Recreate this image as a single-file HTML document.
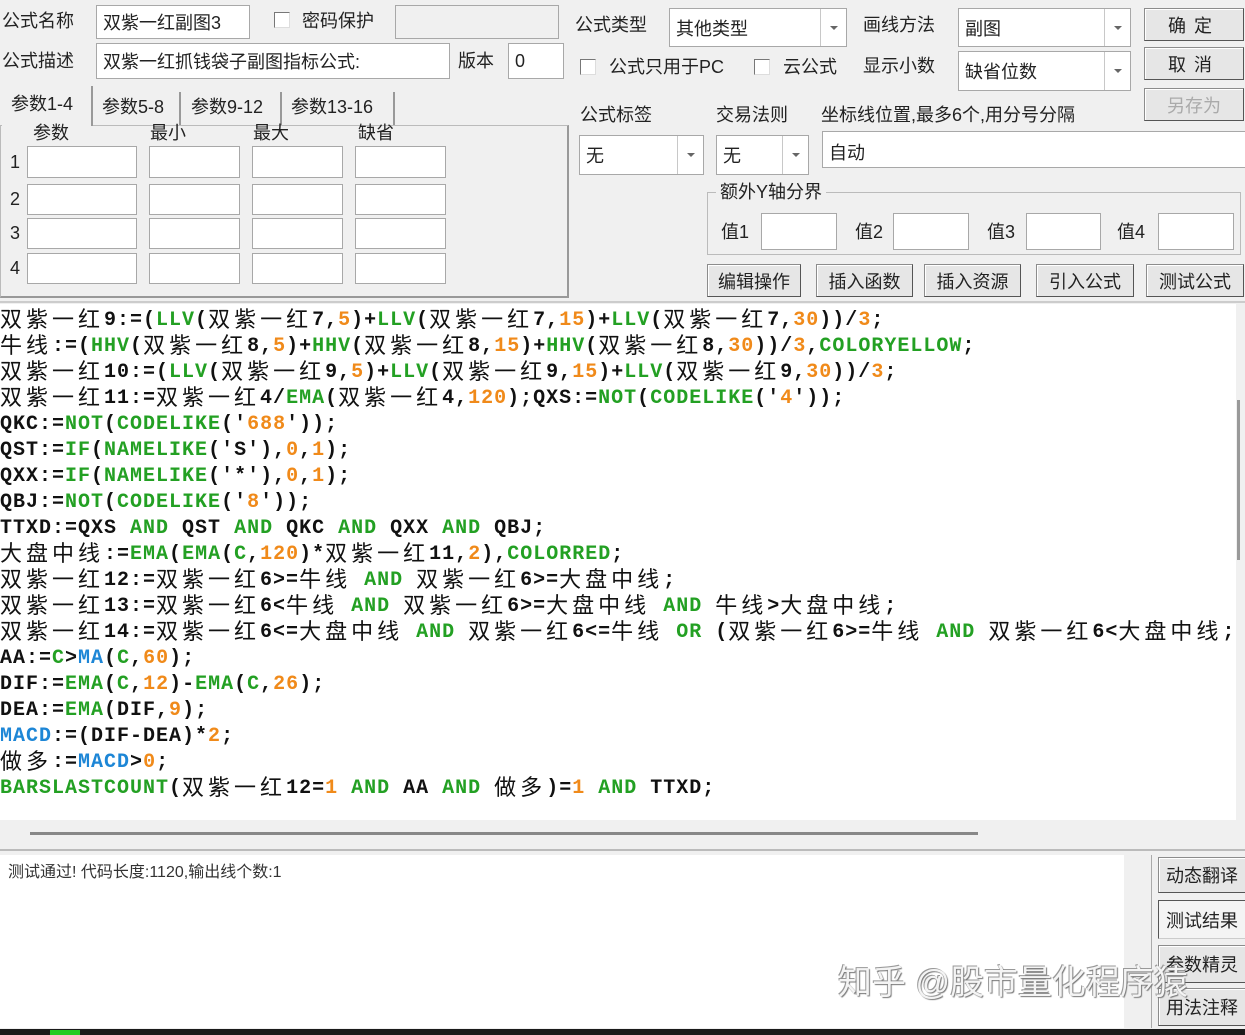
<!DOCTYPE html>
<html><head><meta charset="utf-8"><style>
*{box-sizing:border-box;margin:0;padding:0}
body{width:1245px;height:1035px;background:#f0f0f0;position:relative;overflow:hidden;font-family:"Liberation Sans","Noto Sans CJK SC",sans-serif;font-size:18px;color:#222}
.a{position:absolute}
.l{position:absolute;white-space:nowrap;line-height:1}
.in{position:absolute;background:#fff;border:1px solid #a8a8a8;white-space:nowrap;padding-left:6px;display:flex;align-items:center}
.dis{background:#f0f0f0}
.sel{position:absolute;background:#fff;border:1px solid #a8a8a8;padding-left:6px;display:flex;align-items:center}
.sel .ar{position:absolute;right:0;top:0;bottom:0;width:26px;border-left:1px solid #c8c8c8;display:flex;align-items:center;justify-content:center}
.sel .ar:after{content:"";border-left:4px solid transparent;border-right:4px solid transparent;border-top:4px solid #666}
.cb{position:absolute;width:16px;height:16px;border:1px solid #777;background:#fff;border-right-color:#ddd;border-bottom-color:#ddd}
.bt{position:absolute;background:#e6e6e6;border:1px solid #8c8c8c;border-right-color:#555;border-bottom-color:#555;box-shadow:inset 1px 1px 0 #fff;display:flex;align-items:center;justify-content:center;white-space:nowrap;font-size:18px}
#code{position:absolute;left:0;top:304px;width:1236px;height:516px;background:#fff;overflow:hidden;padding-top:4px}
#code div{height:26px;line-height:26px;white-space:nowrap;font-family:"Liberation Mono",monospace;font-weight:bold;font-size:20px;letter-spacing:1px;color:#111;overflow:hidden}
.c{font-family:"Noto Sans CJK SC",sans-serif;font-weight:normal;letter-spacing:4px;font-size:22px;line-height:20px;display:inline-block;vertical-align:-2px}
.g{color:#23a023}.o{color:#f08a1a}.b{color:#1d86d6}
.tab{position:absolute;top:92px;height:33px;border-right:2px solid #999}
</style></head><body>
<!-- top left -->
<div class="l" style="left:2px;top:12px">公式名称</div>
<div class="in" style="left:96px;top:5px;width:154px;height:34px">双紫一红副图3</div>
<div class="cb" style="left:274px;top:12px"></div>
<div class="l" style="left:302px;top:12px">密码保护</div>
<div class="in dis" style="left:395px;top:5px;width:164px;height:34px"></div>
<div class="l" style="left:2px;top:52px">公式描述</div>
<div class="in" style="left:96px;top:43px;width:354px;height:36px">双紫一红抓钱袋子副图指标公式:</div>
<div class="l" style="left:458px;top:52px">版本</div>
<div class="in" style="left:508px;top:43px;width:56px;height:36px">0</div>
<!-- tabs -->
<div class="a" style="left:0;top:125px;width:569px;height:173px;border:1px solid #bbb;border-right:2px solid #999;border-bottom:2px solid #999"></div>
<div class="a" style="left:2px;top:86px;width:91px;height:40px;background:#f0f0f0;border-right:2px solid #999"></div>
<div class="l" style="left:11px;top:95px">参数1-4</div>
<div class="tab" style="left:93px;width:88px"></div>
<div class="l" style="left:102px;top:98px">参数5-8</div>
<div class="tab" style="left:181px;width:101px"></div>
<div class="l" style="left:191px;top:98px">参数9-12</div>
<div class="tab" style="left:282px;width:113px"></div>
<div class="l" style="left:291px;top:98px">参数13-16</div>
<div class="l" style="left:33px;top:124px">参数</div>
<div class="l" style="left:150px;top:124px">最小</div>
<div class="l" style="left:253px;top:124px">最大</div>
<div class="l" style="left:358px;top:124px">缺省</div>
<div class="l" style="left:10px;top:153px">1</div><div class="l" style="left:10px;top:190px">2</div><div class="l" style="left:10px;top:224px">3</div><div class="l" style="left:10px;top:259px">4</div>
<div class="in" style="left:27px;top:146px;width:110px;height:32px"></div><div class="in" style="left:149px;top:146px;width:91px;height:32px"></div><div class="in" style="left:252px;top:146px;width:91px;height:32px"></div><div class="in" style="left:355px;top:146px;width:91px;height:32px"></div>
<div class="in" style="left:27px;top:184px;width:110px;height:31px"></div><div class="in" style="left:149px;top:184px;width:91px;height:31px"></div><div class="in" style="left:252px;top:184px;width:91px;height:31px"></div><div class="in" style="left:355px;top:184px;width:91px;height:31px"></div>
<div class="in" style="left:27px;top:218px;width:110px;height:31px"></div><div class="in" style="left:149px;top:218px;width:91px;height:31px"></div><div class="in" style="left:252px;top:218px;width:91px;height:31px"></div><div class="in" style="left:355px;top:218px;width:91px;height:31px"></div>
<div class="in" style="left:27px;top:253px;width:110px;height:31px"></div><div class="in" style="left:149px;top:253px;width:91px;height:31px"></div><div class="in" style="left:252px;top:253px;width:91px;height:31px"></div><div class="in" style="left:355px;top:253px;width:91px;height:31px"></div>
<!-- top right -->
<div class="l" style="left:575px;top:16px">公式类型</div>
<div class="sel" style="left:669px;top:8px;width:178px;height:39px">其他类型<div class="ar"></div></div>
<div class="l" style="left:863px;top:16px">画线方法</div>
<div class="sel" style="left:958px;top:8px;width:173px;height:39px">副图<div class="ar"></div></div>
<div class="bt" style="left:1144px;top:8px;width:100px;height:33px;letter-spacing:8px">确定</div>
<div class="bt" style="left:1144px;top:47px;width:100px;height:33px;letter-spacing:8px">取消</div>
<div class="bt" style="left:1144px;top:88px;width:100px;height:33px;color:#aaa">另存为</div>
<div class="cb" style="left:580px;top:59px"></div>
<div class="l" style="left:609px;top:58px">公式只用于PC</div>
<div class="cb" style="left:754px;top:59px"></div>
<div class="l" style="left:783px;top:58px">云公式</div>
<div class="l" style="left:863px;top:57px">显示小数</div>
<div class="sel" style="left:958px;top:51px;width:173px;height:40px">缺省位数<div class="ar"></div></div>
<div class="l" style="left:580px;top:106px">公式标签</div>
<div class="l" style="left:716px;top:106px">交易法则</div>
<div class="l" style="left:821px;top:106px">坐标线位置,最多6个,用分号分隔</div>
<div class="sel" style="left:579px;top:135px;width:125px;height:40px">无<div class="ar"></div></div>
<div class="sel" style="left:716px;top:135px;width:93px;height:40px">无<div class="ar"></div></div>
<div class="in" style="left:822px;top:131px;width:430px;height:37px;align-items:flex-start;padding-top:7px">自动</div>
<div class="a" style="left:707px;top:192px;width:534px;height:63px;border:1px solid #bbb"></div>
<div class="l" style="left:716px;top:183px;background:#f0f0f0;padding:0 4px">额外Y轴分界</div>
<div class="l" style="left:721px;top:223px">值1</div><div class="in" style="left:761px;top:213px;width:76px;height:37px"></div>
<div class="l" style="left:855px;top:223px">值2</div><div class="in" style="left:893px;top:213px;width:76px;height:37px"></div>
<div class="l" style="left:987px;top:223px">值3</div><div class="in" style="left:1026px;top:213px;width:75px;height:37px"></div>
<div class="l" style="left:1117px;top:223px">值4</div><div class="in" style="left:1158px;top:213px;width:76px;height:37px"></div>
<div class="bt" style="left:707px;top:264px;width:94px;height:33px">编辑操作</div>
<div class="bt" style="left:816px;top:264px;width:97px;height:33px">插入函数</div>
<div class="bt" style="left:924px;top:264px;width:97px;height:33px">插入资源</div>
<div class="bt" style="left:1036px;top:264px;width:98px;height:33px">引入公式</div>
<div class="bt" style="left:1146px;top:264px;width:98px;height:33px">测试公式</div>
<!-- code -->
<div class="a" style="left:0;top:301px;width:1245px;height:2px;background:#ccc"></div>
<div id="code">
<div><span class="c">双紫一红</span>9:=(<span class="g">LLV</span>(<span class="c">双紫一红</span>7,<span class="o">5</span>)+<span class="g">LLV</span>(<span class="c">双紫一红</span>7,<span class="o">15</span>)+<span class="g">LLV</span>(<span class="c">双紫一红</span>7,<span class="o">30</span>))/<span class="o">3</span>;</div>
<div><span class="c">牛线</span>:=(<span class="g">HHV</span>(<span class="c">双紫一红</span>8,<span class="o">5</span>)+<span class="g">HHV</span>(<span class="c">双紫一红</span>8,<span class="o">15</span>)+<span class="g">HHV</span>(<span class="c">双紫一红</span>8,<span class="o">30</span>))/<span class="o">3</span>,<span class="g">COLORYELLOW</span>;</div>
<div><span class="c">双紫一红</span>10:=(<span class="g">LLV</span>(<span class="c">双紫一红</span>9,<span class="o">5</span>)+<span class="g">LLV</span>(<span class="c">双紫一红</span>9,<span class="o">15</span>)+<span class="g">LLV</span>(<span class="c">双紫一红</span>9,<span class="o">30</span>))/<span class="o">3</span>;</div>
<div><span class="c">双紫一红</span>11:=<span class="c">双紫一红</span>4/<span class="g">EMA</span>(<span class="c">双紫一红</span>4,<span class="o">120</span>);QXS:=<span class="g">NOT</span>(<span class="g">CODELIKE</span>('<span class="o">4</span>'));</div>
<div>QKC:=<span class="g">NOT</span>(<span class="g">CODELIKE</span>('<span class="o">688</span>'));</div>
<div>QST:=<span class="g">IF</span>(<span class="g">NAMELIKE</span>('S'),<span class="o">0</span>,<span class="o">1</span>);</div>
<div>QXX:=<span class="g">IF</span>(<span class="g">NAMELIKE</span>('*'),<span class="o">0</span>,<span class="o">1</span>);</div>
<div>QBJ:=<span class="g">NOT</span>(<span class="g">CODELIKE</span>('<span class="o">8</span>'));</div>
<div>TTXD:=QXS <span class="g">AND</span> QST <span class="g">AND</span> QKC <span class="g">AND</span> QXX <span class="g">AND</span> QBJ;</div>
<div><span class="c">大盘中线</span>:=<span class="g">EMA</span>(<span class="g">EMA</span>(<span class="g">C</span>,<span class="o">120</span>)*<span class="c">双紫一红</span>11,<span class="o">2</span>),<span class="g">COLORRED</span>;</div>
<div><span class="c">双紫一红</span>12:=<span class="c">双紫一红</span>6&gt;=<span class="c">牛线</span> <span class="g">AND</span> <span class="c">双紫一红</span>6&gt;=<span class="c">大盘中线</span>;</div>
<div><span class="c">双紫一红</span>13:=<span class="c">双紫一红</span>6&lt;<span class="c">牛线</span> <span class="g">AND</span> <span class="c">双紫一红</span>6&gt;=<span class="c">大盘中线</span> <span class="g">AND</span> <span class="c">牛线</span>&gt;<span class="c">大盘中线</span>;</div>
<div><span class="c">双紫一红</span>14:=<span class="c">双紫一红</span>6&lt;=<span class="c">大盘中线</span> <span class="g">AND</span> <span class="c">双紫一红</span>6&lt;=<span class="c">牛线</span> <span class="g">OR</span> (<span class="c">双紫一红</span>6&gt;=<span class="c">牛线</span> <span class="g">AND</span> <span class="c">双紫一红</span>6&lt;<span class="c">大盘中线</span>;</div>
<div>AA:=<span class="g">C</span>&gt;<span class="b">MA</span>(<span class="g">C</span>,<span class="o">60</span>);</div>
<div>DIF:=<span class="g">EMA</span>(<span class="g">C</span>,<span class="o">12</span>)-<span class="g">EMA</span>(<span class="g">C</span>,<span class="o">26</span>);</div>
<div>DEA:=<span class="g">EMA</span>(DIF,<span class="o">9</span>);</div>
<div><span class="b">MACD</span>:=(DIF-DEA)*<span class="o">2</span>;</div>
<div><span class="c">做多</span>:=<span class="b">MACD</span>&gt;<span class="o">0</span>;</div>
<div><span class="g">BARSLASTCOUNT</span>(<span class="c">双紫一红</span>12=<span class="o">1</span> <span class="g">AND</span> AA <span class="g">AND</span> <span class="c">做多</span>)=<span class="o">1</span> <span class="g">AND</span> TTXD;</div>
</div>
<div class="a" style="left:1236px;top:304px;width:9px;height:545px;background:#f0f0f0"></div>
<div class="a" style="left:1237px;top:400px;width:3px;height:160px;background:#999"></div>
<div class="a" style="left:30px;top:832px;width:948px;height:3px;background:#888"></div>
<div class="a" style="left:0;top:849px;width:1245px;height:2px;background:#bbb"></div>
<!-- bottom -->
<div class="a" style="left:0;top:855px;width:1124px;height:173px;background:#fff"></div>
<div class="a" style="left:1124px;top:855px;width:28px;height:173px;background:#f0f0f0;border-right:1px solid #aaa"></div>
<div class="l" style="left:8px;top:865px;font-size:16px;color:#333">测试通过! 代码长度:1120,输出线个数:1</div>
<div class="bt" style="left:1158px;top:857px;width:88px;height:36px">动态翻译</div>
<div class="bt" style="left:1158px;top:900px;width:88px;height:39px;background:#f4f4f4;border-color:#555 #ccc #ccc #555;box-shadow:none">测试结果</div>
<div class="bt" style="left:1158px;top:945px;width:88px;height:38px">参数精灵</div>
<div class="bt" style="left:1158px;top:988px;width:88px;height:38px">用法注释</div>
<div class="l" style="left:838px;top:966px;font-size:34px;color:#f4f4f4;text-shadow:1px 1px 1px #777,-1px -1px 0 #999">知乎 @股市量化程序猿</div>
<div class="a" style="left:0;top:1029px;width:1245px;height:6px;background:#1a1a1a"></div>
<div class="a" style="left:50px;top:1030px;width:30px;height:5px;background:#2c2"></div>
</body></html>
